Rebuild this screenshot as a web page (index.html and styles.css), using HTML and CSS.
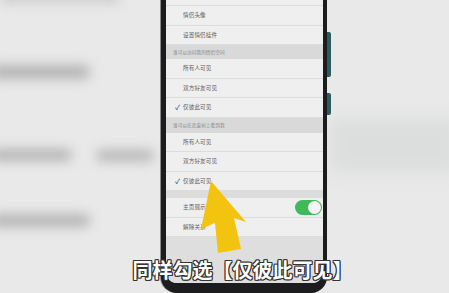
FILE: index.html
```html
<!DOCTYPE html>
<html lang="zh">
<head>
<meta charset="utf-8">
<link rel="stylesheet" href="styles.css">
</head>
<body>
<div class="backdrop">
  <div class="blob b0"></div>
  <div class="blob b1"></div>
  <div class="blob b2"></div>
  <div class="blob b3"></div>
  <div class="blob b4"></div>
  <div class="band"></div>
</div>
<div class="stage">
  <div class="phone">
    <div class="bezel">
      <div class="screen">
        <div class="row partial"></div>
        <div class="row"><span class="label">情侣头像</span></div>
        <div class="row"><span class="label">设置情侣挂件</span></div>
        <div class="section">谁可以访问我的情侣空间</div>
        <div class="row"><span class="label">所有人可见</span></div>
        <div class="row"><span class="label">双方好友可见</span></div>
        <div class="row checked"><span class="check">✓</span><span class="label">仅彼此可见</span></div>
        <div class="section tall">谁可以在恋爱树上看到我</div>
        <div class="row"><span class="label">所有人可见</span></div>
        <div class="row"><span class="label">双方好友可见</span></div>
        <div class="row checked"><span class="check">✓</span><span class="label">仅彼此可见</span></div>
        <div class="gap"></div>
        <div class="row toggle-row"><span class="label">主页展示恋爱树</span><span class="toggle"><span class="knob"></span></span></div>
        <div class="row"><span class="label">解除关系</span></div>
        <div class="rest"></div>
      </div>
    </div>
    <div class="buttons">
      <div class="btn btn1"></div>
      <div class="btn btn2"></div>
    </div>
  </div>
</div>
<svg class="arrow" width="449" height="293" viewBox="0 0 449 293">
  <polygon points="211,181 201,229 215,223 218,253 241,249 234,218 246,222" fill="#f2c40f"/>
</svg>
<div class="caption">同样勾选【仅彼此可见】</div>
</body>
</html>
```

FILE: styles.css
```css
html, body {
  margin: 0;
  padding: 0;
}
body {
  width: 449px;
  height: 293px;
  overflow: hidden;
  background: #e9e9e9;
  position: relative;
  font-family: "Noto Sans CJK SC", "Noto Sans", sans-serif;
}
.backdrop {
  position: absolute;
  inset: 0;
  overflow: hidden;
}
.blob {
  position: absolute;
  background: #b4b4b4;
  filter: blur(6px);
  border-radius: 6px;
}
.b0 { left: 0; top: -6px; width: 120px; height: 8px; background: #c4c4c4; }
.b1 { left: -10px; top: 65px; width: 100px; height: 14px; }
.b2 { left: -10px; top: 149px; width: 82px; height: 12px; }
.b3 { left: 96px; top: 150px; width: 58px; height: 11px; }
.b4 { left: -10px; top: 214px; width: 100px; height: 13px; }
.band {
  position: absolute;
  left: 330px;
  top: 118px;
  width: 130px;
  height: 55px;
  background: #dcdede;
  filter: blur(8px);
}
.stage {
  position: relative;
  display: flex;
  padding-left: 161px;
}
.phone {
  display: flex;
}
.bezel {
  background: #1c1c1e;
  padding: 0 4px 10px 5px;
  border-radius: 0 0 16px 16px;
  box-shadow: -1px 0 0 #8a8a8a;
}
.screen {
  width: 157px;
  height: 283px;
  background: #dedede;
  border-radius: 0 0 11px 11px;
  overflow: hidden;
  display: flex;
  flex-direction: column;
}
.row {
  height: 19.5px;
  flex: none;
  background: #efefef;
  border-bottom: 1px solid #dcdcdc;
  box-sizing: border-box;
  display: flex;
  align-items: center;
  padding-left: 17px;
  font-size: 5.6px;
  color: #5e5e5e;
  letter-spacing: 0.1px;
}
.row.partial { height: 6px; }
.row.checked { padding-left: 9px; }
.check {
  width: 8px;
  color: #4f6e98;
  font-size: 7px;
  font-weight: bold;
}
.section {
  height: 14px;
  flex: none;
  background: #d9d9d9;
  display: flex;
  align-items: center;
  padding-left: 7px;
  font-size: 4.7px;
  color: #8a8a8a;
}
.section.tall { height: 15px; }
.gap {
  height: 7px;
  flex: none;
  background: #dcdcdc;
}
.toggle-row {
  justify-content: space-between;
  padding-right: 1px;
}
.toggle {
  width: 27px;
  height: 15px;
  border-radius: 8px;
  background: #3fb95a;
  display: flex;
  align-items: center;
  justify-content: flex-end;
  padding-right: 1px;
  box-sizing: border-box;
}
.knob {
  width: 13px;
  height: 13px;
  border-radius: 50%;
  background: #f4f4f4;
}
.rest {
  flex: 1;
  background: #dedede;
}
.buttons {
  display: flex;
  flex-direction: column;
  padding-top: 32px;
  gap: 16px;
}
.btn {
  width: 4px;
  background: #2c5b5b;
  border-radius: 0 2px 2px 0;
}
.btn1 { height: 45px; }
.btn2 { height: 22px; }
.arrow {
  position: absolute;
  left: 0;
  top: 0;
}
.caption {
  position: absolute;
  left: 36px;
  right: 0;
  top: 255px;
  text-align: center;
  font-size: 20px;
  font-weight: bold;
  color: #ffffff;
  font-family: "Noto Sans CJK SC", sans-serif;
  text-shadow:
    1px 0 0 #333, -1px 0 0 #333, 0 1px 0 #333, 0 -1px 0 #333,
    1px 1px 0 #333, -1px -1px 0 #333, 1px -1px 0 #333, -1px 1px 0 #333;
}
```
